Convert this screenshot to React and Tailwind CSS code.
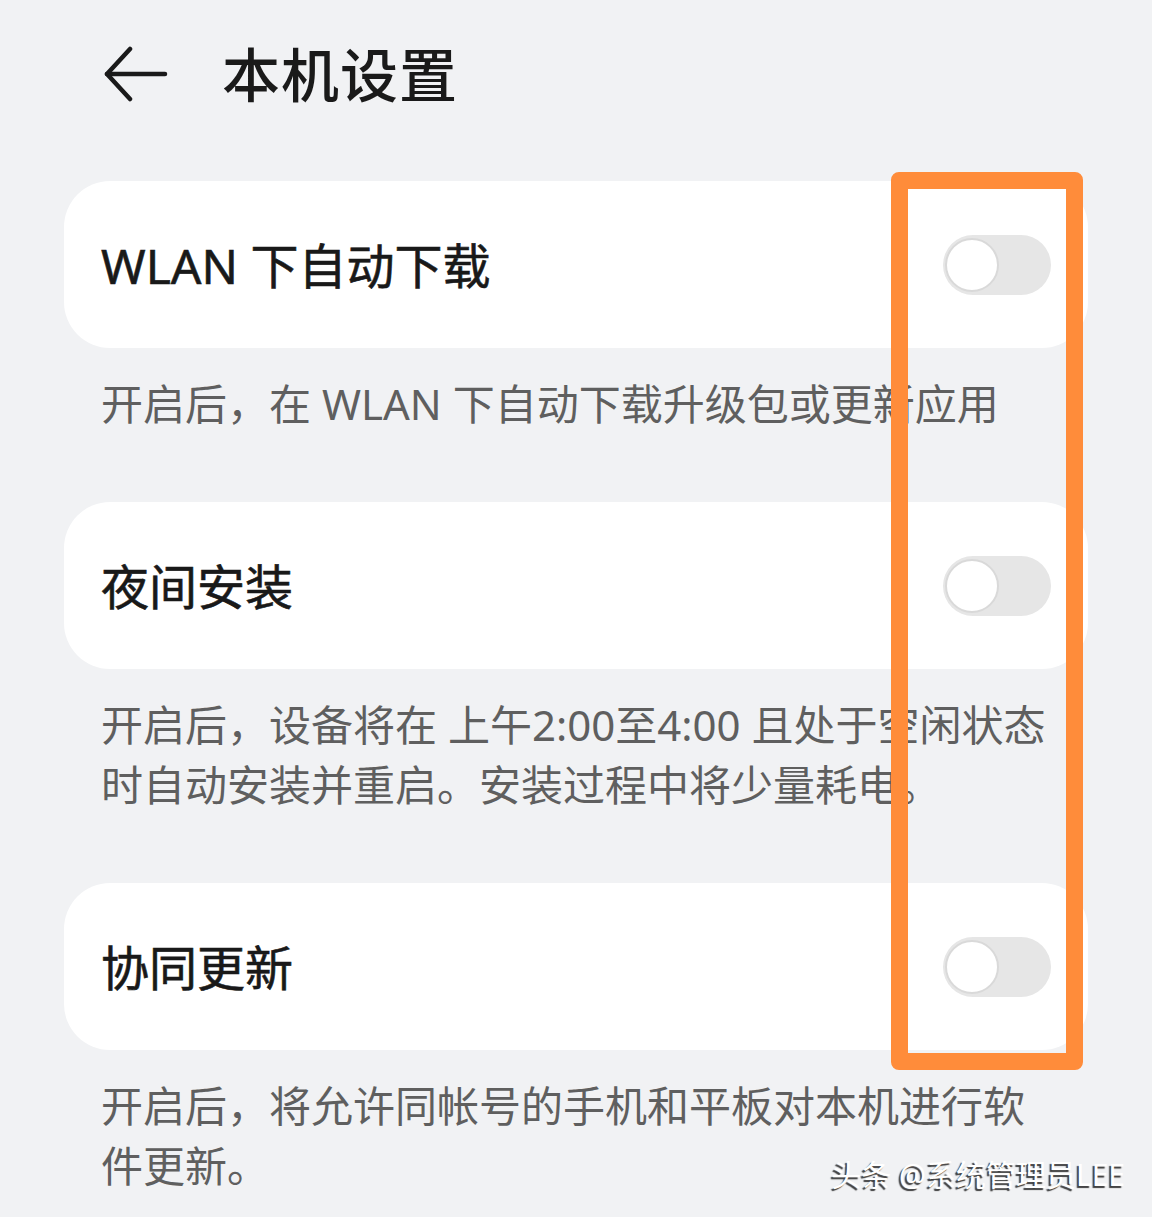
import { useState } from 'react';

const settings = [
  {
    id: 'wlan',
    title: 'WLAN 下自动下载',
    desc: ['开启后，在 WLAN 下自动下载升级包或更新应用'],
  },
  {
    id: 'night',
    title: '夜间安装',
    desc: ['开启后，设备将在 上午2:00至4:00 且处于空闲状态', '时自动安装并重启。安装过程中将少量耗电。'],
  },
  {
    id: 'sync',
    title: '协同更新',
    desc: ['开启后，将允许同帐号的手机和平板对本机进行软', '件更新。'],
  },
];

function Toggle({ on, onChange }) {
  return (
    <button
      onClick={onChange}
      className={`relative h-[60px] w-[108px] shrink-0 rounded-full ${on ? 'bg-[#0a59f7]' : 'bg-[#e6e6e6]'}`}
    >
      <span
        className={`absolute top-[3px] h-[54px] w-[54px] rounded-full border-2 border-[#d9d9d9] bg-white ${on ? 'left-[51px]' : 'left-[2px]'}`}
      />
    </button>
  );
}

function BackArrow() {
  return (
    <svg width="64" height="58" viewBox="0 0 64 58" fill="none" stroke="#1a1a1a" strokeWidth="4.5" strokeLinecap="round" strokeLinejoin="round">
      <path d="M3 28 H61" />
      <path d="M26 3 L3 28 L26 53" />
    </svg>
  );
}

export default function App() {
  const [state, setState] = useState({ wlan: false, night: false, sync: false });

  return (
    <div
      className="relative min-h-[1217px] w-full overflow-hidden bg-[#f1f2f4] px-16"
      style={{ fontFamily: '"Noto Sans", "Noto Sans CJK SC", sans-serif' }}
    >
      <div className="flex h-[150px] items-center">
        <div className="ml-[40px] flex w-[118px]">
          <BackArrow />
        </div>
        <h1 className="text-[58px] font-medium leading-none tracking-[1px] text-[#1a1a1a]">本机设置</h1>
      </div>

      <div className="mt-[31px] flex flex-col">
        {settings.map((s) => (
          <div key={s.id} className="pb-[68px]">
            <div className="flex h-[167px] items-center justify-between rounded-[46px] bg-white px-[37px]">
              <span className="pt-[2px] text-[48px] font-normal leading-none text-[#191919] [-webkit-text-stroke:0.6px_#191919]">{s.title}</span>
              <Toggle on={state[s.id]} onChange={() => setState({ ...state, [s.id]: !state[s.id] })} />
            </div>
            <p className="mt-[26px] pl-[37px] text-[42px] leading-[60px] text-[#5f5f5f]">
              {s.desc.map((line, i) => (
                <span key={i} className="block whitespace-nowrap">{line}</span>
              ))}
            </p>
          </div>
        ))}
      </div>

      {/* highlight frame around the switches */}
      <div className="pointer-events-none absolute left-[891px] top-[172px] h-[898px] w-[192px] rounded-[8px] border-[17px] border-[#ff8c3a]" />

      <div className="pointer-events-none absolute right-[27px] top-[1155px] text-[30px] leading-[40px] text-white [text-shadow:-2px_2px_1px_rgba(0,0,0,0.75)]">
        头条 @系统管理员LEE
      </div>
    </div>
  );
}
